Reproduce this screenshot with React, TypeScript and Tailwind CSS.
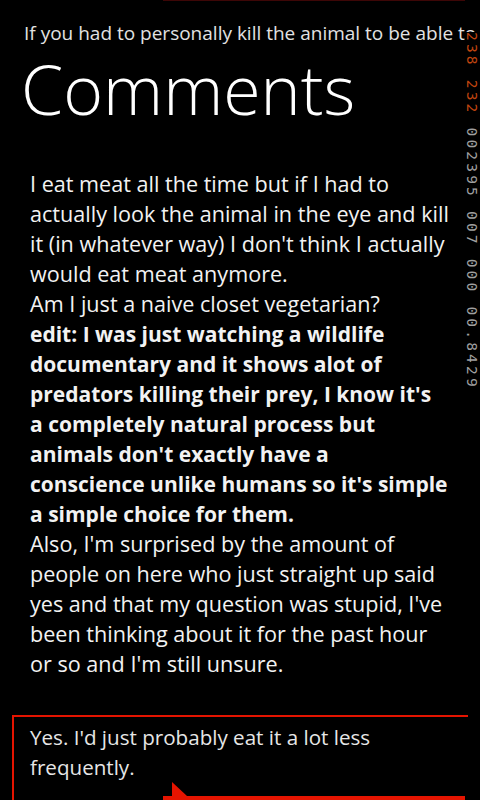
import React from 'react'

const body = [
  { t: 'I eat meat all the time but if I had to' },
  { t: 'actually look the animal in the eye and kill' },
  { t: "it (in whatever way) I don't think I actually" },
  { t: 'would eat meat anymore.' },
  { t: 'Am I just a naive closet vegetarian?' },
  { t: 'edit: I was just watching a wildlife', b: true },
  { t: 'documentary and it shows alot of', b: true },
  { t: "predators killing their prey, I know it's", b: true },
  { t: 'a completely natural process but', b: true },
  { t: "animals don't exactly have a", b: true },
  { t: "conscience unlike humans so it's simple", b: true },
  { t: 'a simple choice for them.', b: true },
  { t: "Also, I'm surprised by the amount of" },
  { t: 'people on here who just straight up said' },
  { t: "yes and that my question was stupid, I've" },
  { t: 'been thinking about it for the past hour' },
  { t: "or so and I'm still unsure." },
]

export default function App() {
  return (
    <div className="relative w-[480px] h-[800px] overflow-hidden bg-black font-['Open_Sans',sans-serif]">
      <div className="ml-[163px] w-[302px] h-px bg-[#3d0606]" />

      <div className="mt-[19px] pl-6 whitespace-nowrap text-[19px] leading-[26px] text-[#e2e2e2]">
        If you had to personally kill the animal to be able to eat it, would you still eat meat?
      </div>

      <h1 className="ml-[21px] mt-[1px] text-[68px] leading-[84px] font-light text-white">Comments</h1>

      <div className="mt-[38px] pl-[30px] leading-[30px] text-[#f2f2f2]">
        {body.map((line, i) => (
          <div
            key={i}
            className={line.b ? 'whitespace-nowrap text-[21px] font-bold' : 'whitespace-nowrap text-[21.6px]'}
          >
            {line.t}
          </div>
        ))}
      </div>

      <div className="mt-[36px] ml-3 mr-3 border-l-2 border-t-2 border-[#e51400]">
        <div className="pt-[5px] pl-4 text-[20.6px] leading-[30px] text-[#e6e6e6]">
          <div>Yes. I'd just probably eat it a lot less</div>
          <div>frequently.</div>
        </div>
        <svg width="466" height="19" viewBox="0 0 466 19" className="block">
          <path d="M158 0 L173 14 L158 14 Z" fill="#e51400" />
          <rect x="149" y="14" width="302" height="5" fill="#e51400" />
        </svg>
      </div>

      {/* frame rate counters down the right edge */}
      <div className="absolute top-[32px] left-[465px] whitespace-pre bg-black [writing-mode:vertical-rl] font-['DejaVu_Sans_Mono',monospace] text-[14.5px] leading-[14px] tracking-[3.2px] text-[#a0a0a0]">
        <span className="text-[#c0450f]">238 232</span> 002395 007 000 00.8429
      </div>
    </div>
  )
}
